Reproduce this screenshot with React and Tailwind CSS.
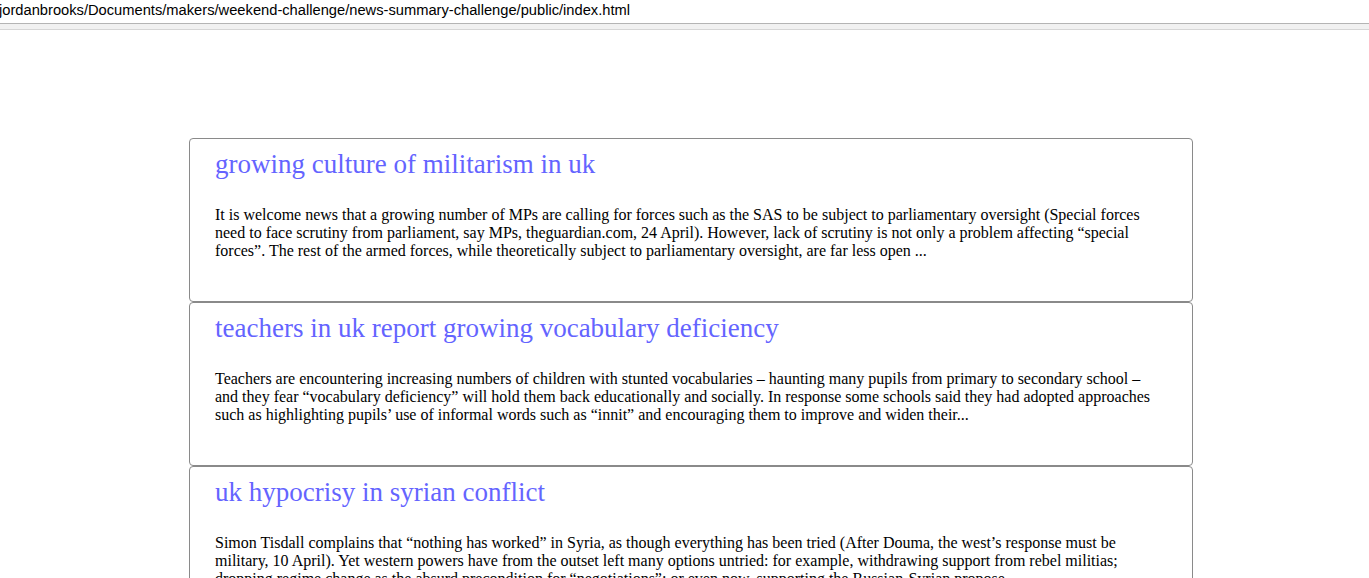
const articles = [
  {
    title: "growing culture of militarism in uk",
    body: "It is welcome news that a growing number of MPs are calling for forces such as the SAS to be subject to parliamentary oversight (Special forces need to face scrutiny from parliament, say MPs, theguardian.com, 24 April). However, lack of scrutiny is not only a problem affecting \u201cspecial forces\u201d. The rest of the armed forces, while theoretically subject to parliamentary oversight, are far less open ...",
  },
  {
    title: "teachers in uk report growing vocabulary deficiency",
    body: "Teachers are encountering increasing numbers of children with stunted vocabularies \u2013 haunting many pupils from primary to secondary school \u2013 and they fear \u201cvocabulary deficiency\u201d will hold them back educationally and socially. In response some schools said they had adopted approaches such as highlighting pupils\u2019 use of informal words such as \u201cinnit\u201d and encouraging them to improve and widen their...",
  },
  {
    title: "uk hypocrisy in syrian conflict",
    body: "Simon Tisdall complains that \u201cnothing has worked\u201d in Syria, as though everything has been tried (After Douma, the west\u2019s response must be military, 10 April). Yet western powers have from the outset left many options untried: for example, withdrawing support from rebel militias; dropping regime change as the absurd precondition for \u201cnegotiations\u201d; or even now, supporting the Russian-Syrian propose...",
  },
];

const Article = ({ title, body }) => (
  <div className="h-[164px] border border-[#8a8a8a] rounded-[4px] pt-[10px] px-[25px]">
    <a href="#" className="block text-[27px] leading-[30px] text-[#6464ff]">
      {title}
    </a>
    <p className="mt-[27px] text-[16px] leading-[18px] text-black">{body}</p>
  </div>
);

export default function App() {
  return (
    <div className="min-h-screen bg-white" style={{ fontFamily: '"Liberation Serif", "Times New Roman", serif' }}>
      <div className="h-[24px] border-b border-[#b4b4b4] overflow-hidden">
        <div
          className="ml-[-1px] pt-[1px] text-[14.7px] leading-[19px] text-black whitespace-nowrap"
          style={{ fontFamily: '"Liberation Sans", Arial, sans-serif' }}
        >
          jordanbrooks/Documents/makers/weekend-challenge/news-summary-challenge/public/index.html
        </div>
      </div>
      <div className="h-[6px] bg-[#f1f1f1] border-b border-[#d6d6d6]" />

      <div className="mt-[108px] ml-[189px] w-[1004px]">
        {articles.map((a) => (
          <Article key={a.title} title={a.title} body={a.body} />
        ))}
      </div>
    </div>
  );
}
